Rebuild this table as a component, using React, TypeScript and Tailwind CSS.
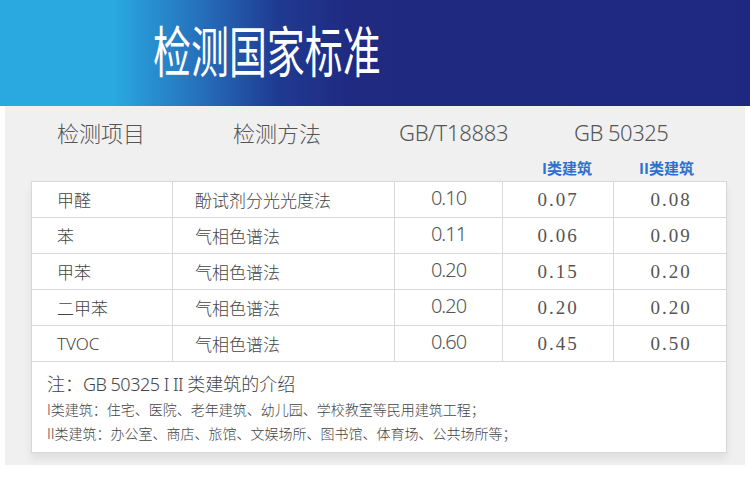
const rows = [
  { name: "甲醛", method: "酚试剂分光光度法", gbt: "0.10", c1: "0.07", c2: "0.08" },
  { name: "苯", method: "气相色谱法", gbt: "0.11", c1: "0.06", c2: "0.09" },
  { name: "甲苯", method: "气相色谱法", gbt: "0.20", c1: "0.15", c2: "0.20" },
  { name: "二甲苯", method: "气相色谱法", gbt: "0.20", c1: "0.20", c2: "0.20" },
  { name: "TVOC", method: "气相色谱法", gbt: "0.60", c1: "0.45", c2: "0.50" },
];

const cjk = "font-['Noto_Sans_CJK_SC',sans-serif]";
const cols = "grid grid-cols-[141px_222px_108px_111px_114px]";

export default function App() {
  return (
    <div className={`w-[750px] h-[492px] bg-white overflow-hidden ${cjk}`}>
      <div className="h-[106px] bg-[linear-gradient(90deg,#2aa9e1_0%,#2aa9e1_15%,#2569b6_28%,#1f3a92_37%,#1f2a80_47%,#1f2880_100%)] flex items-center">
        <h1 className="ml-[153px] -mt-[10px] text-[55px] leading-none text-white origin-left scale-x-[0.69] whitespace-nowrap">
          检测国家标准
        </h1>
      </div>

      <div className="mx-[5px] h-[359px] bg-[#f0f0f0] pt-[2px]">
        <div className="ml-[26px] w-[696px]">
          <div className={`${cols} h-[48px] items-center text-[22px] font-light text-[#555]`}>
            <div className="pl-[26px]">检测项目</div>
            <div className="pl-[61px]">检测方法</div>
            <div className="pl-[5px] font-['Noto_Sans',sans-serif] font-light tracking-[-0.3px] whitespace-nowrap">GB/T18883</div>
            <div className="col-span-2 pl-[72px] font-['Noto_Sans',sans-serif] font-light tracking-[-0.5px]">GB 50325</div>
          </div>
          <div className={`${cols} h-[25px] items-center text-[15px] font-bold text-[#2f6fd0]`}>
            <div />
            <div />
            <div />
            <div className="pl-[40px]">I类建筑</div>
            <div className="pl-[26px]">II类建筑</div>
          </div>

          <div className="bg-white border border-[#d8d8d8] shadow-[0_6px_8px_rgba(0,0,0,0.07)]">
            {rows.map((r) => (
              <div
                key={r.name}
                className={`${cols} h-[36px] border-b border-[#d8d8d8] text-[#444]`}
              >
                <div className="pl-[25px] flex items-center text-[17px] font-light border-r border-[#d8d8d8]">
                  {r.name === "TVOC" ? (
                    <span className="font-['Noto_Sans',sans-serif] font-light">{r.name}</span>
                  ) : (
                    r.name
                  )}
                </div>
                <div className="pl-[22px] flex items-center text-[17px] font-light border-r border-[#d8d8d8]">
                  {r.method}
                </div>
                <div className="flex items-center justify-center pb-[3px] text-[20px] text-[#555] font-['Noto_Sans',sans-serif] font-light tracking-[-1px] border-r border-[#d8d8d8]">
                  {r.gbt}
                </div>
                <div className="flex items-center justify-center pt-[1px] text-[19px] text-[#555] font-['Liberation_Serif',serif] tracking-[2px] border-r border-[#d8d8d8]">
                  {r.c1}
                </div>
                <div className="flex items-center justify-center pt-[1px] text-[19px] text-[#555] font-['Liberation_Serif',serif] tracking-[2px]">
                  {r.c2}
                </div>
              </div>
            ))}

            <div className="h-[90px] pl-[15px] pt-[8px] text-[#444]">
              <div className="text-[18px] leading-[26px] font-light whitespace-nowrap">
                注：<span className="font-['Noto_Sans',sans-serif] font-light tracking-[-0.5px]">GB 50325 I II </span>类建筑的介绍
              </div>
              <div className="text-[14px] leading-[24px] font-light whitespace-nowrap">
                I类建筑：住宅、医院、老年建筑、幼儿园、学校教室等民用建筑工程；
              </div>
              <div className="text-[14px] leading-[24px] font-light whitespace-nowrap">
                II类建筑：办公室、商店、旅馆、文娱场所、图书馆、体育场、公共场所等；
              </div>
            </div>
          </div>
        </div>
      </div>
    </div>
  );
}
